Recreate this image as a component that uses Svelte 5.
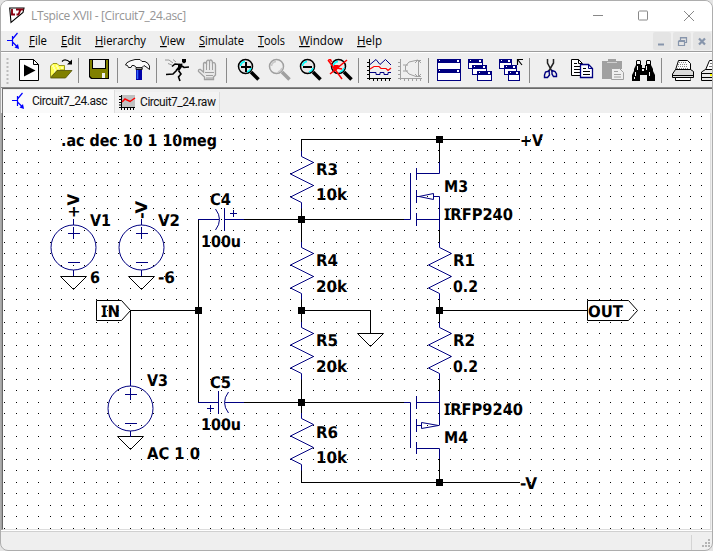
<script>
  const menus = [
    ['F', 'ile', 18], ['E', 'dit', 20], ['H', 'ierarchy', 51], ['V', 'iew', 25],
    ['S', 'imulate', 45], ['T', 'ools', 27], ['W', 'indow', 44], ['H', 'elp', 25]
  ];
  const groups = [
    ['run', 'open'], ['save'], ['hammer'], ['runner', 'hand'],
    ['zoomin', 'zoompan', 'zoomout', 'zoomfit'], ['plot', 'smith'],
    ['tile', 'cascade', 'closeall'], ['cut', 'copy', 'paste', 'find'], ['print', 'setup']
  ];

  const grid = 11.43;
  let dots = '';
  for (let r = 0; r < 37; r++) {
    for (let c = 0; c < 62; c++) {
      dots += `M${Math.round(4.15 + c * grid)} ${Math.round(116.1 + r * grid)}h1v1h-1z`;
    }
  }

  const resistors = [[301, 151], [301, 242], [301, 322], [301, 413], [439, 242], [439, 322]];
  const zig = 'M.5 0V5.5L12.5 11.5L-10.5 23L12.5 34.5L-10.5 46L.5 51.5V57.5';
  const sources = [[73, 247], [141, 247], [130, 408]];
  const grounds = [[73, 276], [141, 276], [130, 436], [370, 333]];
  const nodes = [[439, 139], [301, 219], [198, 310], [301, 310], [439, 310], [301, 402], [439, 482]];
  const labels = [
    ['.ac dec 10 1 10meg', 61, 146, 156],
    ['V1', 90, 226, 21], ['V2', 158, 226, 22], ['6', 90, 283, 10], ['-6', 158, 283, 17],
    ['C4', 210, 205, 21], ['100u', 201, 247, 40], ['C5', 210, 388, 21], ['100u', 201, 430, 40],
    ['R3', 316, 175, 22], ['10k', 316, 200, 31], ['R4', 316, 266, 22], ['20k', 316, 292, 31],
    ['R5', 316, 346, 22], ['20k', 316, 372, 31], ['R6', 316, 438, 22], ['10k', 316, 463, 31],
    ['M3', 444, 192, 24], ['IRFP240', 444, 220, 69], ['R1', 453, 266, 22], ['0.2', 453, 292, 25],
    ['R2', 453, 346, 22], ['0.2', 453, 372, 25], ['IRFP9240', 444, 415, 79], ['M4', 444, 443, 24],
    ['+V', 520, 146, 23], ['-V', 520, 489, 17], ['OUT', 588, 317, 35], ['IN', 101, 317, 19],
    ['V3', 147, 386, 21], ['AC 1 0', 147, 459, 53]
  ];
</script>

{#snippet transistor()}
  <svg class="npn" width="14" height="18" viewBox="0 0 14 18" fill="none" stroke="#00f" stroke-width="1.2">
    <path d="M0 8.500H5M5.500 4V14M5.500 7L10.500 1M5.500 10L11 15.500" /><path d="M12 17L7.500 15.500L11 12Z" fill="#00f" stroke="none" />
  </svg>
{/snippet}

{#snippet lens(color, glass, shine)}
  <path d="M20 15L27.5 22.5" stroke={color} stroke-width="3.6" fill="none" />
  <circle cx="14.5" cy="9.5" r="7" fill={glass} stroke={color} stroke-width="1.5" />
  <path d="M9.5 9Q10 5 14 4.5M16 15Q19 14 20 11" stroke={shine} stroke-width="1.6" fill="none" />
{/snippet}

{#snippet win(x, y, w, h)}
  <rect x={x + 0.5} y={y + 0.5} width={w - 1} height={h - 1} fill="#fff" stroke="#000080" />
  <path d={`M${x} ${y}h${w}v4h${-w}z`} fill="#000080" />
  <path d={`M${x + 2} ${y + 1}h1v1h-1zM${x + w - 4} ${y + 1}h2v2h-2z`} fill="#fff" />
{/snippet}

{#snippet icon(name)}
  <svg class="icon" width="31" height="26" viewBox="0 0 31 26">
    {#if name === 'run'}
      <path d="M6.5 2.5H20.5L25.5 7.5V23.5H6.5Z" fill="#fff" stroke="#000" />
      <path d="M20.5 2.5V7.5H25.5" fill="none" stroke="#000" />
      <path d="M11 7.5L22.5 13.5L11 19.5Z" />
    {:else if name === 'open'}
      <path d="M6.5 20V9L9 6.5H13L15 8.5H20.5V13H14L6.5 20Z" fill="#ffff50" stroke="#808000" stroke-width=".8" />
      <path d="M8 9h2m2 0h2m-5 2h2m2 0h2m2 0h2m-9 2h2m2 0h2m-6 2h2" stroke="#fff" />
      <path d="M13 13.5H28L21.5 21H6.5Z" fill="#808000" stroke="#505000" stroke-width=".8" />
      <path d="M18 4.500Q21 1 26.500 5.500" fill="none" stroke="#000" stroke-width="1.2" /><path d="M28 2.500V7.500H23Z" />
    {:else if name === 'save'}
      <path d="M6 2H26V22H8L6 20Z" /><path d="M7 3H9V13H23V3H25V21H9L7 19Z" fill="#808000" />
      <path d="M10 3H22V11H10Z" fill="#efefef" /><path d="M19 16H22V21H19Z" fill="#efefef" />
      <path d="M7 12H25V15H7Z" fill="#808000" />
    {:else if name === 'hammer'}
      <path d="M14 12H20V23H14Z" fill="#0000a8" /><path d="M15.500 13V22" stroke="#36f" stroke-width="1.5" />
      <path d="M3.500 8Q4 5.500 8 4L13 2.500H18L20 4.500H23Q26.500 6 27.500 9V12.500L25 10.500L22 8.500L20 10.500V12.500H14.500V10.500L12 8.500H10L9 10.500H6.500L5.500 8.500Z" fill="#fafafa" stroke="#000" stroke-width=".9" />
      <path d="M14 10.500H20V12.500H14Z" fill="#999" stroke="#000" stroke-width=".8" />
    {:else if name === 'runner'}
      <path d="M21 2H25V5L23 6.500L21 5Z" />
      <path d="M17 7L21.500 6.500L21 10L18.500 13.500L14.500 13L17 10Z" />
      <path d="M21 9L23 10.500L28 10M19 7.500L14 7L11 9.500M16 13L12 17L5 17.500M17.500 13.500L20 17L17.500 20L19 24" fill="none" stroke="#000" stroke-width="1.6" />
      <path d="M4 3H8L12 6M7 6.500L11 8M12 2.500L15 5" fill="none" stroke="#999" />
    {:else if name === 'hand'}
      <path d="M12.500 22.500V20L6.500 14.500Q6 12 8.500 12.500L11.500 15V6.500Q12.500 4.500 14.500 6.500V4.500Q16 2 17.500 4V3.500Q19.500 2 20.500 5V6Q23 4.500 23.500 8V18L21.500 20V22.500Z" fill="#e9e9e9" stroke="#a0a0a0" stroke-width="1.300" />
      <path d="M14.500 6V13M17.500 4V13M20.500 5V13M13 15.500H22M14 18.500H21M14 21H21" stroke="#a0a0a0" fill="none" />
    {:else if name === 'zoomin'}
      {@render lens('#000', '#e8e8e8', '#0ff')}<path d="M10 10H20M15 5V15" stroke="#000" stroke-width="2" />
    {:else if name === 'zoompan'}
      {@render lens('#a0a0a0', '#efefef', '#c8c8c8')}
    {:else if name === 'zoomout'}
      {@render lens('#000', '#e8e8e8', '#0ff')}<path d="M10 10H19" stroke="#000" stroke-width="2" />
    {:else if name === 'zoomfit'}
      {@render lens('#000', '#e8e8e8', '#0ff')}<path d="M4 3L18 22M23 3L6 17M8 10L18 12" stroke="#f00" stroke-width="1.5" fill="none" /><path d="M4 2H7L9 6L7 5ZM10 8H14L16 9L12 14L9 13Z" fill="#f00" />
    {:else if name === 'plot'}
      <path d="M6.500 2V23M4 21.500H28M4 5.500h3M4 9.500h3M4 13.500h3M4 17.500h3M10.500 21v3M14.500 21v3M18.500 21v3M22.500 21v3M26.500 21v3" stroke="#000" />
      <path d="M7 7.500L13 2.500L17 7.500L22.500 2.500L28 8" fill="none" stroke="#000080" />
      <path d="M7 12L11 9.500H16L18 11.500H23L25 13.500L28 11" fill="none" stroke="#f00" stroke-width="1.200" />
      <path d="M7 15.500H13V17.500H17V15.500H21V17.500H25V15.500H28" fill="none" stroke="#000080" />
    {:else if name === 'smith'}
      <path d="M6.500 2V23M4 21.500H28M4 5.500h3M4 9.500h3M4 13.500h3M4 17.500h3M10.500 21v3M14.500 21v3M18.500 21v3M22.500 21v3M26.500 21v3" stroke="#a0a0a0" />
      <path d="M27 3.500H22M24.500 3V20M27 19.500H22L15 17L11.500 13V9L15 5L24 3M9 8H14M9 14H14M21 6L24 3L27 6M21 17L24 20L27 17" fill="none" stroke="#a0a0a0" />
    {:else if name === 'tile'}
      {@render win(4, 2, 24, 12)}{@render win(4, 12, 24, 12)}
    {:else if name === 'cascade'}
      {@render win(4, 2, 15, 10)}{@render win(8, 8, 15, 10)}{@render win(13, 14, 15, 10)}
    {:else if name === 'closeall'}
      {@render win(4, 2, 13, 10)}{@render win(9, 8, 13, 10)}{@render win(13, 14, 12, 10)}
      <path d="M22.500 8V2.500H28M23 3L27 8" fill="none" stroke="#000" stroke-width="1.200" />
    {:else if name === 'cut'}
      <path d="M13.500 2V6L18 14.500M19.500 2V6L14.500 14.500" fill="none" stroke="#222" stroke-width="1.500" />
      <path d="M15 14L11.500 15L10.500 18V20.500H13.500L15.500 18Z" fill="none" stroke="#000080" stroke-width="1.400" />
      <path d="M18 13.500L21 14.500L22.500 17V19.500H19.500L18 17Z" fill="none" stroke="#000080" stroke-width="1.400" />
    {:else if name === 'copy'}
      <path d="M6.500 2.500H13.500L17.500 6.500V18.500H6.500Z" fill="#fff" stroke="#000" />
      <path d="M13.500 2.500V6.500H17M9 6.500h3M9 9.500h6M9 12.500h6M9 15.500h6" fill="none" stroke="#000" />
      <path d="M15.500 7.500H23.500L27.500 11.500V20.500H15.500Z" fill="#fff" stroke="#000080" stroke-width="1.300" />
      <path d="M23.500 7.500V11.500H27.500" fill="none" stroke="#000080" /><path d="M18 11.500h3M18 14.500h7M18 17.500h7" stroke="#000" />
    {:else if name === 'paste'}
      <path d="M6 4H12V2H20V4H26V12H15V22H6Z" fill="#a0a0a0" /><path d="M11 5.500H21" stroke="#d0d0d0" />
      <path d="M15.500 11.500H23.500L27.500 15.500V22.500H15.500Z" fill="#efefef" stroke="#a0a0a0" /><path d="M18 14.500h4M18 17.500h7M18 20h7" stroke="#a0a0a0" />
    {:else if name === 'find'}
      <path d="M9 4L10 3H13L14 4V8H15V11H18V8H19V4L20 3H23L24 4V8L26 12V14L28 18V24H20V18H13V24H5V18L7 14V12L9 8Z" />
      <path d="M10 4h3v3h-3zM20 4h3v3h-3zM10 9h1v4h-1zM19 9h1v4h-1zM8 15h1v4h-1zM22 15h1v4h-1zM7 20h1v2h-1zM15 12h2v2h-2z" fill="#f4f4f4" />
    {:else if name === 'print'}
      <path d="M9.500 13L12.500 3.500H21.500L24.500 6.500V13" fill="#fff" stroke="#000" />
      <path d="M13 5.500h8m-9 2h10m-10 2h10m-11 2h11" stroke="#888" stroke-dasharray="1 1" />
      <path d="M6.500 17L9.500 12.500H24.500L27.500 14.500V20.500H24.500V23.500H9.500V20.500H6.500Z" fill="#dcdcdc" stroke="#000" />
      <path d="M7 18.500H27M9.500 20.500H25" stroke="#000" fill="none" /><path d="M10 21h14.500v2H10z" fill="#fff" />
    {:else}
      <path d="M8.500 13L12.500 3.500H24V13" fill="#fff" stroke="#000" /><path d="M13 6.500h8m-9 3h8" stroke="#777" />
      <path d="M4.500 15L8.500 12.500H26V23.500H4.500Z" fill="#e8e8e8" stroke="#000" /><path d="M5 16.500H20M5 20.500H20" stroke="#000" /><path d="M13 17h8v2h-8z" fill="#ff0" />
    {/if}
  </svg>
{/snippet}

<div class="desk">
  <div class="window">
    <header class="title">
      <svg class="logo" width="16" height="17" viewBox="0 0 16 17">
        <path d="M.7 1H15L14 5.500L2 15.500Z" fill="#fff" stroke="#000" stroke-width="1.100" />
        <path d="M3 2V7.500H6M7 2.500H14.500M11.500 2.500L9.500 7.500H7.500" fill="none" stroke="#8a0010" stroke-width="1.900" />
      </svg>
      <span class="caption">LTspice XVII - [Circuit7_24.asc]</span>
      <svg class="controls" width="102" height="12" viewBox="0 0 102 12" fill="none" stroke="#888" stroke-width="1">
        <path d="M0 5.500H10M46 1.500Q46 1 46.500 1H54Q54.500 1 54.500 1.500V9.500Q54.500 10 54 10H46.500Q45.500 10 45.500 9.500V1.500M91 1L101 11M101 1L91 11" />
      </svg>
    </header>
    <nav>
      {@render transistor()}
      <div class="menus">
        {#each menus as m}
          <span style:width="{m[2]}px"><svg width={m[2]} height="18"><text x="0" y="13" textLength={m[2]} lengthAdjust="spacingAndGlyphs"><tspan text-decoration="underline">{m[0]}</tspan>{m[1]}</text></svg></span>
        {/each}
      </div>
      <div class="mdi">
        <svg viewBox="0 0 18 18"><path d="M5 12.500H11" stroke="#8795ab" stroke-width="2" /></svg>
        <svg viewBox="0 0 18 18"><path d="M5.500 9V13.500H11.500V8.500H5.500M5 9.500H12M7.500 8V5.500H13.500V10.500H12M7 6H14" fill="none" stroke="#8795ab" stroke-width="1.200" /></svg>
        <svg viewBox="0 0 18 18"><path d="M6 6.500L12 12.500M12 6.500L6 12.500" stroke="#8795ab" stroke-width="2.200" /></svg>
      </div>
    </nav>
    <div class="toolbar">
      <svg class="grip" width="3" height="28"><path d="M1.500 0V28" stroke="#bbb" stroke-width="2" stroke-dasharray="2 2" /></svg>
      {#each groups as g, i}
        {#if i}<div class="sep"></div>{/if}
        {#each g as name}{@render icon(name)}{/each}
      {/each}
    </div>
    <div class="tabs">
      <div class="tab active">{@render transistor()}<span>Circuit7_24.asc</span></div>
      <div class="tab">
        <svg width="17" height="17" viewBox="0 0 17 17"><path d="M2 1H16V14H2Z" fill="#c0c0c0" /><path d="M2.500 1V16M0 13.500H16M0 2.500h2M0 5.500h2M0 8.500h2M0 11h2M5.500 13v3M8.500 13v3M11.500 13v3M14.500 13v3" stroke="#000" /><path d="M3 8L6 5L11 7.500L16 4" fill="none" stroke="#f00" stroke-width="1.500" /></svg>
        <span>Circuit7_24.raw</span>
      </div>
    </div>
    <main>
      <svg width="707" height="416" viewBox="4 113 707 416">
        <path d={dots} shape-rendering="crispEdges" />
        <g fill="none" stroke="#000">
          <path d="M301 139.500H520M301.500 139V151M301.500 208V242M301.500 299V322M301.500 379V413M301.500 470V482.500H520M198.500 219V402M244 219.500H404M244 402.500H404M130 310.500H198M130.500 310V379M301 310.500H370.500V333M439.500 139V162M439.500 230V242M439.500 299V322M439.500 379V391M439.500 459V482M439 310.500H587M96.500 300.500H121.500L130.500 310.500L121.500 320.500H96.500ZM587.500 300.500H628.500L637.500 310.500L628.500 320.500H587.500Z" />
          {#each grounds as [x, y]}
            <path d={`M${x - 12.5} ${y + 0.5}H${x + 13.5}L${x + 0.5} ${y + 13.5}Z`} />
          {/each}
        </g>
        <g fill="none" stroke="#000080">
          {#each resistors as [x, y]}
            <path d={zig} transform={`translate(${x} ${y})`} />
          {/each}
          {#each sources as [x, y]}
            <g transform={`translate(${x} ${y})`}>
              <circle cx=".5" cy=".5" r="22.500" />
              <path d="M.5 -28V-22M.5 23V29M-5 -13.500H7M.5 -20V-8M-5 15.500H7" />
            </g>
          {/each}
          <path d="M198 219.500H219M215.500 209Q223.500 219.500 215.500 230M224.500 208V231M224 219.500H244M230 213.500H237M233.500 210V217" />
          <path d="M198 402.500H218M218.500 391V414M228.500 392Q220.500 402.500 228.500 413M225 402.500H244M207 408.500H214M210.500 405V412" />
          <path d="M404 219.500H410.500V173M416.500 168V180M416.500 190V203M416.500 213V226M416 173.500H439.500V162M416 219.500H439M439.500 230V196.500H434M417 196.500H419L433.500 193.500V199.500L419 196.500" />
          <path d="M404 402.500H410.500V448M416.500 396V409M416.500 419V432M416.500 442V454M416 402.500H439M439.500 391V425.500M416 425.500H421M421.500 422.500V428.500L438.500 425.500ZM416 448.500H439.500V459" />
        </g>
        {#each nodes as [x, y]}<rect x={x - 3} y={y - 3} width="7" height="7" />{/each}
        <g class="labels">
          {#each labels as [t, x, y, w]}
            <text {x} {y} textLength={w} lengthAdjust="spacingAndGlyphs">{#if t[0] === 'I'}<tspan class="serifed">I</tspan>{t.slice(1)}{:else}{t}{/if}</text>
          {/each}
          <text transform="translate(79 218) rotate(-90)" textLength="24" lengthAdjust="spacingAndGlyphs">+V</text>
          <text transform="translate(147 219) rotate(-90)" textLength="18" lengthAdjust="spacingAndGlyphs">-V</text>
        </g>
      </svg>
    </main>
    <footer>
      <div class="pane"></div>
      <svg width="9" height="9"><path d="M7 0h2v2h-2zM4 3h2v2h-2zM7 3h2v2h-2zM1 6h2v2h-2zM4 6h2v2h-2zM7 6h2v2h-2z" fill="#b4b4b4" /></svg>
    </footer>
  </div>
</div>

<style>
  :global(body) { overflow: hidden; }
  .desk { width: 713px; height: 551px; background: #e4e4e4; }
  .window {
    box-sizing: border-box; width: 713px; height: 551px; display: flex; flex-direction: column;
    border: 1px solid #adadad; border-radius: 8px; overflow: hidden; background: #efefef;
    font: 12px "Open Sans", "Noto Sans", sans-serif; color: #111;
  }
  .title { height: 30px; flex: none; display: flex; align-items: center; padding-left: 8px; background: #fff; }
  .logo { margin-top: -1px; }
  .caption { margin-left: 6px; margin-top: -2px; color: #959595; letter-spacing: -.36px; white-space: nowrap; }
  .controls { margin-left: auto; margin-right: 17px; }
  nav { height: 20px; flex: none; display: flex; align-items: center; padding-left: 6px; border-bottom: 1px solid #9c9c9c; }
  .npn { flex: none; }
  .menus { display: flex; gap: 14px; margin-left: 8px; }
  .menus span, .menus svg { display: block; }
  .menus svg { overflow: visible; }
  .mdi { display: flex; gap: 2px; margin-left: auto; margin-right: 1px; }
  .mdi svg { width: 18px; height: 18px; background: #e4e4e4; border-radius: 2px; }
  .toolbar { height: 36px; flex: none; display: flex; align-items: flex-start; border-top: 1px solid #fff; border-bottom: 1px solid #8a8a8a; box-sizing: border-box; overflow: hidden; }
  .grip { flex: none; margin: 5px 4px 0 5px; }
  .icon { flex: none; margin-top: 4px; }
  .sep { flex: none; width: 1px; height: 25px; margin: 5px 4px 0 3px; background: #8a8a8a; }
  .tabs { height: 25px; box-sizing: border-box; flex: none; display: flex; align-items: flex-start; border-top: 1px solid #696969; margin-left: 1px; border-left: 1px solid #777; }
  .tab { display: flex; align-items: center; box-sizing: border-box; height: 20px; margin-top: 3px; padding: 2px 4px; border-right: 1px solid #ddd; background: #f3f3f3; font-family: Roboto, sans-serif; }
  .tab span { letter-spacing: -.48px; margin-left: 4px; white-space: nowrap; }
  .tab.active { height: 23px; margin-top: 1px; padding: 0 7px 2px 9px; background: #fafafa; }
  .tab.active span { margin-left: 6px; }
  main { height: 416px; flex: none; margin: 0 1px; border-left: 1px solid #696969; border-right: 1px solid #ddd; background: #fff; border-bottom: 1px solid #ddd; box-shadow: -1px 0 #a0a0a0; padding-left: 1px; }
  main svg { display: block; }
  .labels { font: bold 16px "DejaVu Sans Condensed", "DejaVu Sans", sans-serif; text-rendering: geometricPrecision; }
  .serifed { font-family: "Noto Sans", sans-serif; }
  footer { flex: 1; display: flex; justify-content: flex-end; align-items: flex-end; border-top: 1px solid #d0d0d0; margin-top: 1px; box-shadow: 0 -1px #fff; }
  .pane { width: 1px; height: 15px; margin-right: 9px; background: #d4d4d4; }
  footer svg { margin: 0 2px 2px 0; }
</style>
